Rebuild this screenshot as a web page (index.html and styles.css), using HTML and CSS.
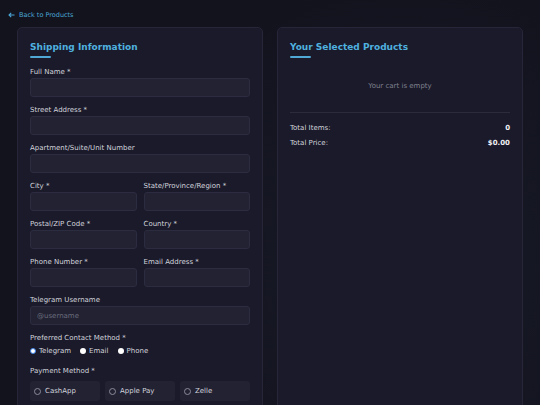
FILE: index.html
```html
<!DOCTYPE html>
<html lang="en">
<head>
  <meta charset="UTF-8" />
  <title>Checkout</title>
  <meta name="viewport" content="width=device-width, initial-scale=1.0" />
  <link rel="stylesheet" href="styles.css">
</head>
<body>

<a class="back-link" href="#">
  <svg width="7" height="6" viewBox="0 0 7 6"><path d="M6.5 3H1M3.2 0.8L1 3l2.2 2.2" fill="none" stroke="currentColor" stroke-width="1.1"/></svg>
  Back to Products
</a>

<div class="checkout">
  <section class="card">
    <h2 class="card-title">Shipping Information</h2>

    <div class="field">
      <label>Full Name *</label>
      <input type="text">
    </div>
    <div class="field">
      <label>Street Address *</label>
      <input type="text">
    </div>
    <div class="field">
      <label>Apartment/Suite/Unit Number</label>
      <input type="text">
    </div>
    <div class="row">
      <div class="field">
        <label>City *</label>
        <input type="text">
      </div>
      <div class="field">
        <label>State/Province/Region *</label>
        <input type="text">
      </div>
    </div>
    <div class="row">
      <div class="field">
        <label>Postal/ZIP Code *</label>
        <input type="text">
      </div>
      <div class="field">
        <label>Country *</label>
        <input type="text">
      </div>
    </div>
    <div class="row">
      <div class="field">
        <label>Phone Number *</label>
        <input type="text">
      </div>
      <div class="field">
        <label>Email Address *</label>
        <input type="text">
      </div>
    </div>
    <div class="field">
      <label>Telegram Username</label>
      <input type="text" placeholder="@username">
    </div>

    <div class="field">
      <label>Preferred Contact Method *</label>
      <div class="radios">
        <span class="radio"><span class="dot checked"></span>Telegram</span>
        <span class="radio"><span class="dot"></span>Email</span>
        <span class="radio"><span class="dot"></span>Phone</span>
      </div>
    </div>

    <div class="field">
      <label>Payment Method *</label>
      <div class="pay-options">
        <div class="pay"><span class="ring"></span>CashApp</div>
        <div class="pay"><span class="ring"></span>Apple Pay</div>
        <div class="pay"><span class="ring"></span>Zelle</div>
      </div>
    </div>
  </section>

  <section class="card">
    <h2 class="card-title">Your Selected Products</h2>
    <p class="empty">Your cart is empty</p>
    <div class="totals">
      <div class="total-row"><span>Total Items:</span><b>0</b></div>
      <div class="total-row"><span>Total Price:</span><b>$0.00</b></div>
    </div>
  </section>
</div>

</body>
</html>
```

FILE: styles.css
```css
* {
  box-sizing: border-box;
  margin: 0;
  padding: 0;
}

html, body {
  height: 100%;
  overflow: hidden;
}

body {
  font-family: "DejaVu Sans", Verdana, sans-serif;
  font-size: 7px;
  color: #d2d3dc;
  background: radial-gradient(circle at 75% 65%, #181a28 0%, #12131d 60%);
  padding: 10px 17px 0 8px;
}

.back-link {
  display: flex;
  align-items: center;
  gap: 4px;
  color: #4aa6d6;
  text-decoration: none;
  font-size: 6.5px;
  height: 9px;
}

.checkout {
  display: grid;
  grid-template-columns: 1fr 1fr;
  gap: 14px;
  margin: 8px 0 0 9px;
}

.card {
  background: #1a1a2a;
  border: 1px solid #262638;
  border-radius: 5px;
  padding: 14px 12px 20px;
  min-height: 400px;
}

.card-title {
  color: #4fb0df;
  font-size: 9px;
  font-weight: bold;
  padding-bottom: 6px;
  position: relative;
  margin-bottom: 10px;
}

.card-title::after {
  content: "";
  position: absolute;
  left: 0;
  bottom: 0;
  width: 21px;
  height: 2px;
  background: #4fa8d6;
  border-radius: 1px;
}

.field {
  margin-bottom: 9px;
}

.field label {
  display: block;
  margin-bottom: 2px;
  line-height: 8px;
}

.field input {
  display: block;
  width: 100%;
  height: 19px;
  background: #222233;
  border: 1px solid #2c2c40;
  border-radius: 3px;
  padding: 0 6px;
  font-family: inherit;
  font-size: 7px;
  color: #d2d3dc;
}

.field input::placeholder {
  color: #6b6c7c;
}

.row {
  display: grid;
  grid-template-columns: 1fr 1fr;
  gap: 7px;
}

.radios {
  display: flex;
  align-items: center;
  gap: 9px;
  height: 14px;
  margin-top: 2px;
}

.radio {
  display: flex;
  align-items: center;
  gap: 3px;
}

.dot {
  width: 6px;
  height: 6px;
  border-radius: 50%;
  background: #fff;
}

.dot.checked {
  background: #fff;
  border: 1.5px solid #3b82e8;
}

.pay-options {
  display: grid;
  grid-template-columns: repeat(3, 1fr);
  gap: 5px;
  margin-top: 6px;
}

.pay {
  display: flex;
  align-items: center;
  gap: 4px;
  height: 20px;
  background: #222233;
  border-radius: 3px;
  padding: 0 4px;
}

.ring {
  width: 7px;
  height: 7px;
  border-radius: 50%;
  border: 1px solid #8a8b98;
}

.empty {
  text-align: center;
  color: #80818f;
  padding: 14px 0 22px;
  border-bottom: 1px solid #2b2b3d;
}

.totals {
  padding-top: 11px;
}

.total-row {
  display: flex;
  justify-content: space-between;
  margin-bottom: 7px;
  line-height: 8px;
}

.total-row b {
  color: #f0f0f4;
}
```
